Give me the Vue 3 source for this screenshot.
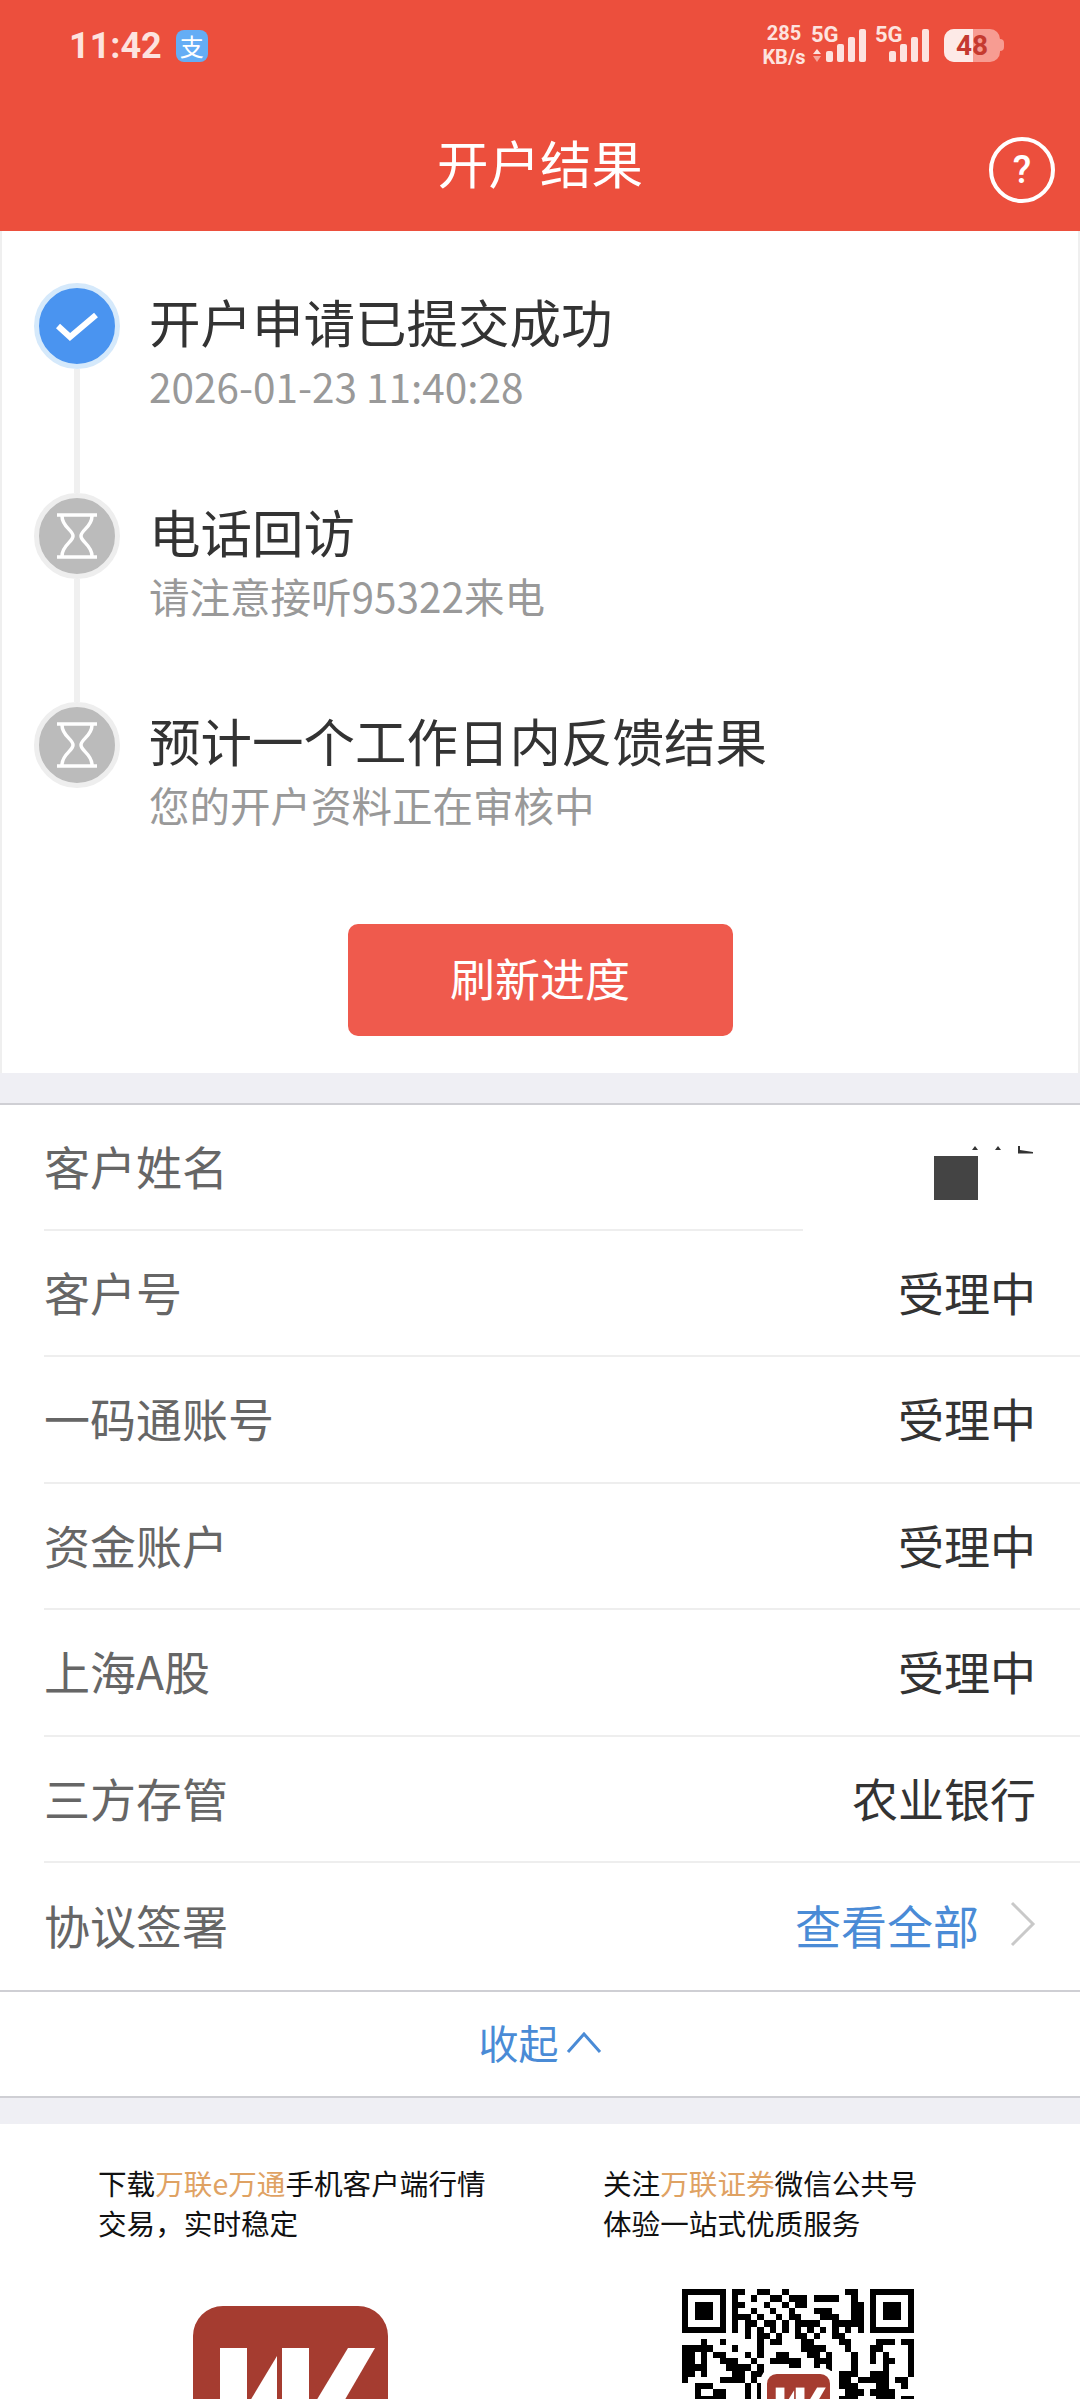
<template>
  <div class="page">
    <header class="top">
      <div class="status">
        <div class="status-left">
          <span class="time">11:42</span>
          <span class="alipay">支</span>
        </div>
        <div class="status-right">
          <div class="speed"><span>285</span><span>KB/s</span></div>
          <svg class="signal" width="56" height="46" viewBox="0 0 56 46">
            <text x="0" y="24" class="sig-text">5G</text>
            <g transform="translate(0 6)">
              <path d="M2 30l4-5 4 5z" fill="#fde3df" />
              <path d="M2 32l4 6 4-6z" fill="#f7a59b" />
              <rect v-for="b in bars" :key="b.x" :x="b.x + 15" :y="b.y" width="7" :height="38 - b.y" rx="2" fill="#fde3df" />
            </g>
          </svg>
          <svg class="signal" width="55" height="46" viewBox="0 0 55 46">
            <text x="0" y="24" class="sig-text">5G</text>
            <g transform="translate(0 6)">
              <rect v-for="b in bars" :key="b.x" :x="b.x + 14" :y="b.y" width="7" :height="38 - b.y" rx="2" fill="#fde3df" />
            </g>
          </svg>
          <div class="battery">
            <div class="battery-fill"></div>
            <span class="battery-num">48</span>
          </div>
        </div>
      </div>
      <div class="nav">
        <span></span>
        <h1>开户结果</h1>
        <div class="help">?</div>
      </div>
    </header>

    <section class="progress">
      <div v-for="(s, i) in steps" :key="s.title" class="step">
        <div class="marker">
          <div class="dot" :class="{ done: s.done }">
            <svg v-if="s.done" width="42" height="34" viewBox="0 0 42 34">
              <path d="M2 17l12 11L40 6" fill="none" stroke="#fff" stroke-width="6" />
            </svg>
            <svg v-else width="44" height="46" viewBox="0 0 44 46">
              <path d="M2 2h40M2 44h40" stroke="#fff" stroke-width="3.5" />
              <path d="M7 3C7 14 18 17 18 23C18 29 7 32 7 43M37 3C37 14 26 17 26 23C26 29 37 32 37 43" fill="none" stroke="#fff" stroke-width="3.5" />
            </svg>
          </div>
          <div v-if="i < steps.length - 1" class="line"></div>
        </div>
        <div class="step-text">
          <div class="step-title">{{ s.title }}</div>
          <div class="step-sub">{{ s.sub }}</div>
        </div>
      </div>
      <button class="refresh" type="button">刷新进度</button>
    </section>

    <div class="gap gap-a"></div>

    <section class="info">
      <div v-for="(r, i) in rows" :key="r.label" class="row">
        <span class="label">{{ r.label }}</span>
        <span class="value" :class="{ link: r.link }">{{ r.value }}</span>
        <svg v-if="r.link" class="more" width="26" height="46" viewBox="0 0 26 46">
          <path d="M2 2l21 21L2 44" fill="none" stroke="#c9c9c9" stroke-width="3" />
        </svg>
        <div v-if="i === 0" class="mask">
          <svg class="marks" width="62" height="8" viewBox="0 0 62 8">
            <path d="M0 4L3 0l3 4zM23 4l3-4 3 4z" fill="#333" />
            <path d="M46 0h2v4l13 2v1.500H46z" fill="#333" />
          </svg>
          <div class="block"></div>
        </div>
      </div>
    </section>
    <div class="collapse">
      <span>收起</span>
      <svg width="36" height="24" viewBox="0 0 36 24">
        <path d="M2 22L18 4l16 18" fill="none" stroke="#4a8bd6" stroke-width="3" />
      </svg>
    </div>

    <div class="gap gap-b"></div>

    <footer class="promo">
      <div class="promo-col">
        <p>下载<em>万联e万通</em>手机客户端行情<br />交易，实时稳定</p>
        <svg class="app-logo" width="195" height="195" viewBox="0 0 195 195">
          <rect width="195" height="195" rx="30" fill="#a53c30" />
          <polygon v-for="p in logoMark" :key="p" :points="p" fill="#fff" />
        </svg>
      </div>
      <div class="promo-col">
        <p>关注<em>万联证券</em>微信公共号<br />体验一站式优质服务</p>
        <svg class="qr" width="232" height="232" viewBox="0 0 37 37" shape-rendering="crispEdges">
          <rect v-for="c in qrCells" :key="c.x + '-' + c.y" :x="c.x" :y="c.y" width="1" height="1" fill="#000" />
        </svg>
        <svg class="qr-logo" width="74" height="74" viewBox="0 0 74 74">
          <rect width="74" height="74" rx="12" fill="#fff" />
          <g transform="translate(6 6) scale(.323)">
            <rect width="195" height="195" rx="30" fill="#a53c30" />
            <polygon v-for="p in logoMark" :key="p" :points="p" fill="#fff" />
          </g>
        </svg>
      </div>
    </footer>
  </div>
</template>

<script setup>
const bars = [
  { x: 0, y: 27 },
  { x: 11, y: 20 },
  { x: 22, y: 13 },
  { x: 33, y: 5 }
]

const steps = [
  { title: '开户申请已提交成功', sub: '2026-01-23 11:40:28', done: true },
  { title: '电话回访', sub: '请注意接听95322来电', done: false },
  { title: '预计一个工作日内反馈结果', sub: '您的开户资料正在审核中', done: false }
]

const rows = [
  { label: '客户姓名', value: '' },
  { label: '客户号', value: '受理中' },
  { label: '一码通账号', value: '受理中' },
  { label: '资金账户', value: '受理中' },
  { label: '上海A股', value: '受理中' },
  { label: '三方存管', value: '农业银行' },
  { label: '协议签署', value: '查看全部', link: true }
]

const logoMark = [
  '27,42 54,42 54,140 27,140',
  '84,50 84,140 30,140',
  '89,42 116,42 116,140 89,140',
  '155,42 182,42 125,140 96,140'
]

// top part of the code only, the page ends before the rest of it
const finder = ['1111111', '1000001', '1011101', '1011101', '1011101', '1000001', '1111111']
const qrData = [
  '110011001000000000110',
  '100100110111011110010',
  '110001001011000000011',
  '100100100100011100011',
  '111010010110001110011',
  '101101101011110011111',
  '101010101010101010101'
]
const qrRows = [
  ...qrData.map((d, i) => finder[i] + '0' + d + '0' + finder[i]),
  '00000000' + '001011010011010011000' + '00000000',
  '0001001000001011000110000110000111011',
  '1111100010001000000111100010001100001',
  '1101011000101001100011010001001010001',
  '1101001110010011111001110001001011001',
  '1111000111101000011001010001000010001',
  '1101000011011000000001000111001110001',
  '1000001111010000000000000110111110110',
  '0011100000101000000000000111000110010',
  '0010011000101000000000000011101111000',
  '0011111000101000000000000111000111011'
]
const qrCells = []
qrRows.forEach((row, y) => {
  for (let x = 0; x < row.length; x++) {
    if (row[x] === '1') qrCells.push({ x, y })
  }
})
</script>

<style scoped>
.page {
  width: 1080px;
  font-family: "Noto Sans CJK SC", "Noto Sans", sans-serif;
  background: #fff;
}

.top {
  height: 231px;
  background: #ec4f3d;
  color: #fff;
}

.status {
  height: 100px;
  display: flex;
  justify-content: space-between;
  align-items: flex-start;
  padding: 24px 80px 0 69px;
  box-sizing: border-box;
}

.status-left {
  display: flex;
  align-items: center;
  gap: 14px;
  height: 44px;
}

.time {
  font-family: Roboto, sans-serif;
  font-weight: 700;
  font-size: 36px;
  color: #fde3df;
}

.alipay {
  width: 32px;
  height: 32px;
  border-radius: 8px;
  background: #64adf5;
  color: #fff;
  font-size: 24px;
  line-height: 32px;
  text-align: center;
}

.status-right {
  display: flex;
  align-items: flex-start;
}

.speed {
  display: flex;
  flex-direction: column;
  align-items: center;
  width: 44px;
  margin: -3px 5px 0 0;
  font-family: Roboto, sans-serif;
  font-weight: 700;
  font-size: 20px;
  line-height: 24px;
  color: #fde3df;
}

.signal {
  display: block;
  margin: -6px 8px 0 0;
}

.sig-text {
  font-family: Roboto, sans-serif;
  font-weight: 700;
  font-size: 22px;
  fill: #fde3df;
}

.battery {
  position: relative;
  width: 56px;
  height: 33px;
  margin: 5px 0 0 6px;
  border-radius: 10px;
  background: #f79c92;
  text-align: center;
}

.battery::after {
  content: "";
  position: absolute;
  left: 56px;
  top: 10px;
  width: 4px;
  height: 12px;
  border-radius: 0 4px 4px 0;
  background: #f79c92;
}

.battery-fill {
  position: absolute;
  left: 0;
  top: 0;
  width: 29px;
  height: 33px;
  border-radius: 10px 0 0 10px;
  background: #fdeae7;
}

.battery-num {
  position: relative;
  font-family: Roboto, sans-serif;
  font-weight: 700;
  font-size: 28px;
  line-height: 33px;
  color: #c53a30;
}

.nav {
  height: 131px;
  display: grid;
  grid-template-columns: 1fr auto 1fr;
  align-items: center;
}

.nav h1 {
  margin: 0 0 8px;
  font-size: 51.500px;
  font-weight: 400;
}

.help {
  justify-self: end;
  width: 58px;
  height: 58px;
  margin: 8px 25px 0 0;
  border: 4px solid #fff;
  border-radius: 50%;
  font-family: Roboto, sans-serif;
  font-size: 38px;
  font-weight: 500;
  line-height: 58px;
  text-align: center;
}

.progress {
  box-sizing: border-box;
  height: 842px;
  padding-top: 52px;
  border: solid #efefef;
  border-width: 0 2px;
  display: flex;
  flex-direction: column;
}

.step {
  display: flex;
  height: 209.500px;
  padding-left: 32px;
}

.marker {
  width: 86px;
  display: flex;
  flex-direction: column;
  align-items: center;
  flex: none;
}

.dot {
  box-sizing: border-box;
  width: 86px;
  height: 86px;
  flex: none;
  border: 5px solid #eeeeee;
  border-radius: 50%;
  background: #bbbbbb;
  display: flex;
  align-items: center;
  justify-content: center;
}

.dot.done {
  border-color: #d5e9fb;
  background: #4a94f0;
}

.line {
  width: 6px;
  flex: 1;
  background: #f0f0f0;
}

.step-text {
  margin: 5px 0 0 29px;
}

.step-title {
  font-size: 51.500px;
  line-height: 66px;
  color: #333;
}

.step-sub {
  margin-top: 7px;
  font-size: 40.500px;
  line-height: 50px;
  color: #999;
}

.refresh {
  align-self: center;
  width: 385px;
  height: 112px;
  margin-top: 12.500px;
  padding: 0 0 6px;
  border: 0;
  border-radius: 10px;
  background: #ef5a4d;
  color: #fff;
  font: inherit;
  font-size: 45px;
}

.gap {
  background: #efeff4;
}

.gap-a {
  height: 30px;
}

.gap-b {
  height: 26px;
}

.info {
  border-top: 2px solid #cfcfd4;
  border-bottom: 2px solid #cfcfd4;
}

.row {
  position: relative;
  box-sizing: border-box;
  height: 126.500px;
  margin-left: 44px;
  padding: 0 44px 4px 0;
  border-bottom: 2px solid #eeeeee;
  display: flex;
  align-items: center;
  font-size: 46px;
}

.row:first-child {
  height: 125.500px;
}

.row:last-child {
  border-bottom: 0;
}

.label {
  flex: 1;
  color: #666;
}

.value {
  color: #333;
}

.value.link {
  color: #4a8bd6;
}

.more {
  margin-left: 31px;
}

/* white patch that hides the name */
.mask {
  position: absolute;
  left: 759px;
  right: 0;
  top: 0;
  bottom: -2px;
  background: #fff;
}

.block {
  position: absolute;
  left: 131px;
  top: 51px;
  width: 44px;
  height: 44px;
  background: #444;
}

.marks {
  position: absolute;
  left: 169px;
  top: 41px;
}

.collapse {
  box-sizing: border-box;
  height: 106px;
  padding-bottom: 4px;
  border-bottom: 2px solid #cfcfd4;
  display: flex;
  align-items: center;
  justify-content: center;
  gap: 7px;
  font-size: 40px;
  color: #4a8bd6;
}

.promo {
  height: 275px;
  display: grid;
  grid-template-columns: 603px 1fr;
  overflow: hidden;
}

.promo-col {
  padding: 39px 0 0 98px;
  position: relative;
}

.promo-col + .promo-col {
  padding-left: 0;
}

.promo p {
  margin: 0;
  font-size: 28.600px;
  line-height: 40px;
  color: #111;
  white-space: nowrap;
}

.promo em {
  font-style: normal;
  color: #dfa263;
}

.app-logo {
  display: block;
  margin: 63px 0 0 95px;
}

.qr {
  display: block;
  margin: 46px 0 0 79px;
}

.qr-logo {
  position: absolute;
  left: 158px;
  top: 244px;
}
</style>

<style>
html,
body {
  margin: 0;
  background: #fff;
}
</style>
